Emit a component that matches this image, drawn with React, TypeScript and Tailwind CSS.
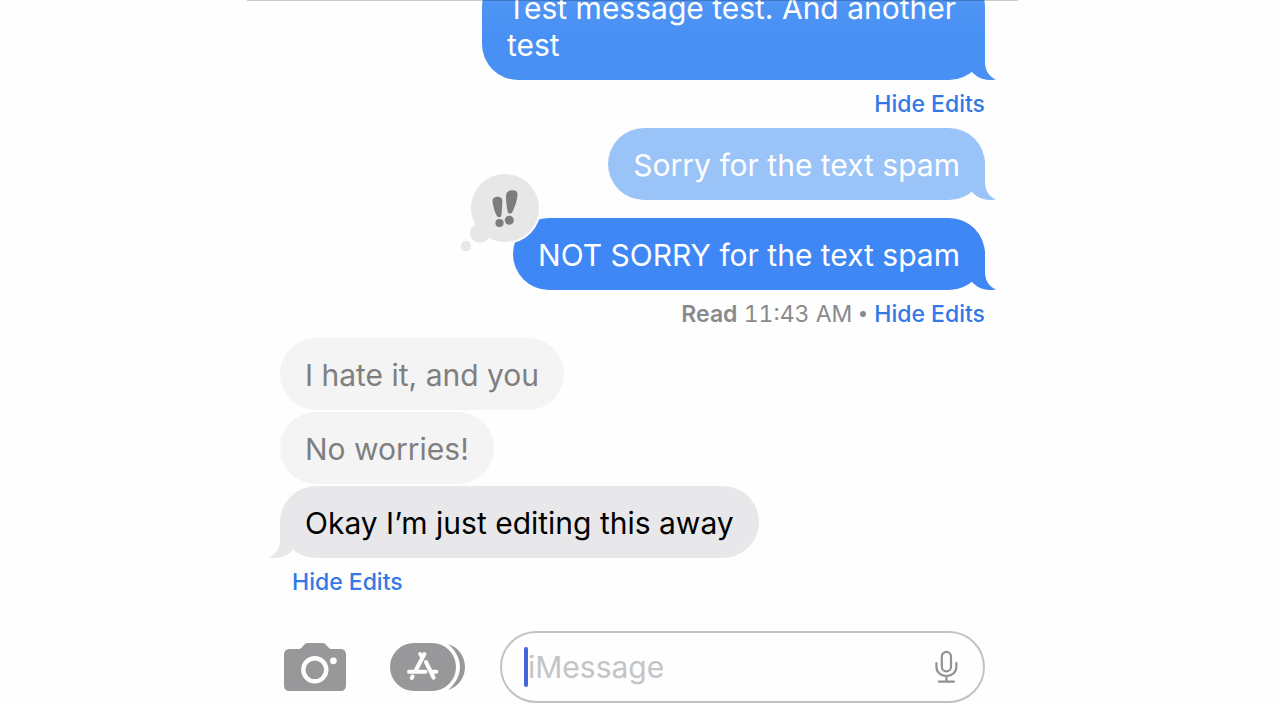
import type { ReactNode } from 'react';
import clsx from 'clsx';

type Message = {
  text: string;
  side: 'me' | 'them';
  style: string;
  tail?: boolean;
  reaction?: boolean;
};

const Tail = ({ side }: { side: 'me' | 'them' }) => (
  <svg
    viewBox="0 0 35 40"
    aria-hidden="true"
    className={clsx('absolute bottom-0 h-10 w-[35px] fill-current', side === 'me' ? '-right-[11px]' : '-left-[11px] -scale-x-100')}
  >
    <path d="M24 0V22C24 30 28 37 35 39.5C27 41.2 17 39 11 32L6 12Z" />
  </svg>
);

const Emphasis = () => (
  <svg viewBox="0 0 84 80" role="img" aria-label="Emphasized" className="absolute -top-[44px] -left-[53px] h-20 w-[84px]">
    <circle cx="45" cy="34" r="36" fill="#fefefe" />
    <g fill="#e7e7e8">
      <circle cx="45" cy="34" r="34" />
      <circle cx="20" cy="59" r="10" />
      <circle cx="6" cy="72" r="5.2" />
    </g>
    <g fill="#7c7c7d">
      <path d="M32.5 27.5C32.2 24.8 34 23.2 37 22.8C40.2 22.5 42.2 23.8 42.3 26.6C42.4 32 41.8 37.5 41.3 41.5C40.9 43.8 37.8 43.8 36.8 41.8C34.6 37.5 33.2 32.5 32.5 27.5Z" />
      <path d="M46 22C46 18.8 48 16.8 51.4 16.3C55.4 15.8 57.8 17.5 57.6 20.8C57.2 26.8 54.8 33 52.4 38C51.2 40.2 48 40 47.6 37.6C46.6 32.5 46 27 46 22Z" />
      <circle cx="39.5" cy="49" r="4.1" />
      <circle cx="49.3" cy="46.3" r="4.5" />
    </g>
  </svg>
);

const Bubble = ({ text, side, style, tail, reaction }: Message) => {
  // the tail takes the bubble colour through currentColor
  return (
    <div className={clsx('relative max-w-[503px] shrink-0 rounded-[36px] px-[25px] pt-[19px] pb-4', style)}>
      {tail && <Tail side={side} />}
      <p className={clsx('relative text-[30px] leading-[37px]', side === 'me' && 'text-white')}>{text}</p>
      {reaction && <Emphasis />}
    </div>
  );
};

const Caption = ({ children, className }: { children: ReactNode; className?: string }) => (
  <div className={clsx('flex h-12 shrink-0 items-center gap-2 text-[23px] text-[#8a8a8d]', className)}>{children}</div>
);

const HideEdits = () => (
  <button type="button" className="font-medium text-[#3478e8]">
    Hide Edits
  </button>
);

const CameraIcon = () => (
  <svg viewBox="0 0 62 48" aria-hidden="true" className="h-12 w-[62px]">
    <path
      fill="#98989a"
      d="M6 6H14C16 6 17 5.4 18.2 4L20 2C21.2 .6 22.4 0 24.2 0H38C39.8 0 41 .6 42.2 2L44 4C45.2 5.4 46.2 6 48 6H56C60 6 62 8 62 12V42C62 46 60 48 56 48H6C2 48 0 46 0 42V12C0 8 2 6 6 6Z"
    />
    <circle cx="30.8" cy="26.8" r="11.5" fill="none" stroke="#fefefe" strokeWidth="4.4" />
    <circle cx="49.4" cy="17.8" r="3.4" fill="#fefefe" />
  </svg>
);

const AppsIcon = () => (
  <svg viewBox="0 0 75 48" aria-hidden="true" className="h-12 w-[75px]">
    <g fill="#98989a">
      <rect width="66" height="48" rx="24" />
      <path d="M58 1C68 4 75 13 75 24C75 35 68 44 58 47C65 41 70 33 70 24C70 15 65 7 58 1Z" />
    </g>
    <g stroke="#fefefe" strokeWidth="4" strokeLinecap="round">
      <path d="M34.4 11L25.5 28" />
      <path d="M30.2 11L32.2 14.2" />
      <path d="M36 19L43.6 34.6" />
      <path d="M19 28.7H35.5" />
      <path d="M42.5 28.7H46.4" />
      <path d="M22.6 33.6L21.8 35" />
    </g>
  </svg>
);

const MicIcon = () => (
  <svg viewBox="0 0 23 34" aria-hidden="true" className="h-[34px] w-[23px]" fill="none" stroke="#929294" strokeWidth="2.2" strokeLinecap="round">
    <rect x="6.8" y="1.9" width="9.2" height="19.4" rx="4.6" />
    <path d="M1.4 13V16.2C1.4 22 5.4 26 11.4 26S21.4 22 21.4 16.2V13M11.4 26V31.6M3.8 31.6H19" />
  </svg>
);

export default function App() {
  return (
    <div className="flex h-screen justify-center bg-[#fefefe] pr-[15px] font-['Inter','Liberation_Sans',sans-serif]">
      <main className="relative flex w-full max-w-[771px] flex-col">
        <div className="absolute inset-x-0 top-0 z-10 h-px bg-black/20" />

        <section aria-label="Conversation" className="flex min-h-0 flex-1 flex-col justify-end overflow-hidden px-[33px]">
          <div className="flex shrink-0 flex-col items-end">
            <Bubble
              side="me"
              tail
              style="bg-linear-to-b from-[#5299f5] to-[#4990f4] to-60% text-[#4990f4]"
              text="Test message test. And another test"
            />
            <Caption>
              <HideEdits />
            </Caption>
            <Bubble side="me" tail style="bg-[#9ac4f8] text-[#9ac4f8]" text="Sorry for the text spam" />
            <div className="h-[18px]" />
            <Bubble side="me" tail reaction style="bg-[#4087f6] text-[#4087f6]" text="NOT SORRY for the text spam" />
            <Caption>
              <span className="tabular-nums">
                <b className="font-semibold">Read</b> 11:43 AM
              </span>
              <span className="size-[6px] rounded-full bg-[#8a8a8d]" />
              <HideEdits />
            </Caption>
          </div>

          <div className="flex shrink-0 flex-col items-start gap-0.5">
            <Bubble side="them" style="bg-[#f4f4f5] text-[#7f7f80]" text="I hate it, and you" />
            <Bubble side="them" style="bg-[#f4f4f5] text-[#7f7f80]" text="No worries!" />
            <Bubble side="them" tail style="bg-[#e8e8eb] text-[#e8e8eb] [&>p]:text-black" text="Okay I’m just editing this away" />
          </div>
          <Caption className="pl-3">
            <HideEdits />
          </Caption>
        </section>

        <form className="flex shrink-0 items-center pt-[25px] pr-[33px] pb-px pl-[37px]">
          <button type="button" aria-label="Camera">
            <CameraIcon />
          </button>
          <button type="button" aria-label="Apps" className="ml-11">
            <AppsIcon />
          </button>
          <div className="ml-[35px] flex h-[72px] min-w-0 flex-1 items-center rounded-full border-2 border-[#c2c2c4] pr-[25px] pl-[22px]">
            <span className="h-10 w-1 shrink-0 rounded-sm bg-[#4364df]" />
            <input
              type="text"
              aria-label="iMessage"
              placeholder="iMessage"
              className="min-w-0 flex-1 bg-transparent text-[30px] outline-none placeholder:text-[#c4c4c6]"
            />
            <button type="button" aria-label="Dictate">
              <MicIcon />
            </button>
          </div>
        </form>
      </main>
    </div>
  );
}
